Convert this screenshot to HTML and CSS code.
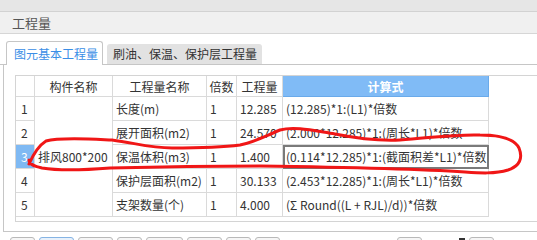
FILE: index.html
```html
<!DOCTYPE html>
<html lang="zh-CN">
<head>
  <meta charset="UTF-8" />
  <title>工程量</title>
  <link rel="stylesheet" href="styles.css">
</head>
<body>
  <div class="topStrip"></div>
  <div class="titleBar">工程量</div>

  <div class="tabs">
    <div class="tab active">图元基本工程量</div>
    <div class="tab">刷油、保温、保护层工程量</div>
  </div>

  <div class="panel">
    <div class="grid">
      <div class="cell head"></div>
      <div class="cell head">构件名称</div>
      <div class="cell head">工程量名称</div>
      <div class="cell head">倍数</div>
      <div class="cell head">工程量</div>
      <div class="cell head formulaHead">计算式</div>

      <div class="cell num">1</div>
      <div class="cell part">排风800*200</div>
      <div class="cell">长度(m)</div>
      <div class="cell">1</div>
      <div class="cell">12.285</div>
      <div class="cell">(12.285)*1:(L1)*倍数</div>

      <div class="cell num">2</div>
      <div class="cell">展开面积(m2)</div>
      <div class="cell">1</div>
      <div class="cell">24.570</div>
      <div class="cell">(2.000*12.285)*1:(周长*L1)*倍数</div>

      <div class="cell num current">3</div>
      <div class="cell">保温体积(m3)</div>
      <div class="cell">1</div>
      <div class="cell">1.400</div>
      <div class="cell selected">(0.114*12.285)*1:(截面积差*L1)*倍数</div>

      <div class="cell num">4</div>
      <div class="cell">保护层面积(m2)</div>
      <div class="cell">1</div>
      <div class="cell">30.133</div>
      <div class="cell">(2.453*12.285)*1:(周长*L1)*倍数</div>

      <div class="cell num">5</div>
      <div class="cell">支架数量(个)</div>
      <div class="cell">1</div>
      <div class="cell">4.000</div>
      <div class="cell">(Σ Round((L + RJL)/d))*倍数</div>
    </div>
  </div>

  <div class="buttons">
    <span class="btn s"></span>
    <span class="btn m on"></span>
    <span class="btn m"></span>
    <span class="btn s"></span>
    <span class="btn l"></span>
    <span class="btn m"></span>
    <span class="btn s"></span>
    <span class="btn s"></span>
    <span class="btn s far"></span>
    <span class="mark"></span>
    <span class="btn s"></span>
  </div>

  <!-- hand drawn red mark -->
  <svg class="scribble" width="537" height="240" viewBox="0 0 537 240">
    <path d="M29 164 C33 155 38 146 46 141 C60 137 90 139 112 140 C135 143 150 148 172 148 C200 148 225 147 240 145 C255 142 265 136 280 130 C295 126 315 131 335 134 C360 139 380 141 400 140 C430 138 455 134 480 135 C500 135 514 138 519 148 C523 158 520 166 508 170 C495 174 480 173 465 172 C420 169 330 167 260 166 C200 166 150 167 110 168 C85 170 60 171 42 168 C33 166 29 164 29 160"
      fill="none" stroke="#f01616" stroke-width="3" stroke-linecap="round" stroke-linejoin="round"/>
  </svg>
</body>
</html>
```

FILE: styles.css
```css
* {
  box-sizing: border-box;
}
body {
  margin: 0;
  width: 537px;
  height: 240px;
  overflow: hidden;
  position: relative;
  background: #fff;
  color: #333;
  font-family: "Noto Sans CJK SC", "Noto Sans", sans-serif;
  font-size: 12px;
}

.topStrip {
  height: 12px;
  background: #e6e6e6;
  border-bottom: 1px solid #d2d2d2;
}

.titleBar {
  height: 22px;
  line-height: 21px;
  padding-left: 12px;
  background: #f0f0f0;
  border-bottom: 1px solid #d6d6d6;
  color: #555;
  font-size: 13px;
}

.tabs {
  display: flex;
  align-items: flex-end;
  gap: 4px;
  margin-top: 7px;
  padding-left: 6px;
  height: 24px;
  border-bottom: 1px solid #c6c6c6;
}

.tab {
  height: 20px;
  line-height: 19px;
  padding: 0 6px;
  background: #e2e2e2;
  border-radius: 3px 3px 0 0;
  color: #333;
  white-space: nowrap;
}

.tab.active {
  height: 24px;
  line-height: 23px;
  width: 97px;
  padding-left: 7px;
  margin-bottom: -1px;
  background: #fff;
  border: 1px solid #c6c6c6;
  border-bottom: none;
  color: #3a8ee6;
}

.tab:not(.active) {
  width: 155px;
}

.panel {
  margin-left: 3px;
  height: 167px;
  padding: 10px 0 0 11px;
  border-left: 1px solid #c6c6c6;
  border-bottom: 1px solid #c6c6c6;
}

.grid {
  display: grid;
  grid-template-columns: 19px 78px 94px 30px 46px 206px;
  grid-template-rows: 21px repeat(5, 24px);
  width: 540px;
  padding-bottom: 4px;
  border-top: 1px solid #d4d4d4;
  border-left: 1px solid #d4d4d4;
  border-bottom: 1px solid #d4d4d4;
}

.cell {
  display: flex;
  align-items: center;
  padding-left: 3px;
  border-right: 1px solid #dadada;
  border-bottom: 1px solid #dadada;
  white-space: nowrap;
  overflow: hidden;
}

.head {
  justify-content: center;
  padding-left: 0;
}

.formulaHead {
  background: #80bbf6;
  border-color: #6aaaea;
  color: #fff;
  font-weight: 600;
}

.num {
  padding-left: 5px;
}

.num.current {
  background: #7fb9f3;
  color: #fff;
}

.part {
  grid-column: 2;
  grid-row: 2 / span 5;
  padding-left: 3px;
}

.selected {
  outline: 2px solid #7a7a7a;
  outline-offset: -2px;
}

.scribble {
  position: absolute;
  left: 0;
  top: 0;
  pointer-events: none;
}

.buttons {
  display: flex;
  gap: 4px;
  margin-top: 5px;
  padding-left: 10px;
}

.btn {
  height: 14px;
  border: 1px solid #b9b9b9;
  border-radius: 3px;
  background: #f6f6f6;
}

.btn.s {
  width: 25px;
}

.btn.m {
  width: 35px;
}

.btn.l {
  width: 37px;
}

.btn.on {
  border-color: #86b4e4;
  background: #e8f1fb;
}

.btn.far {
  margin-left: 113px;
}

.mark {
  width: 6px;
  height: 2px;
  margin-left: 33px;
  margin-top: 1px;
  background: #333;
}
```
